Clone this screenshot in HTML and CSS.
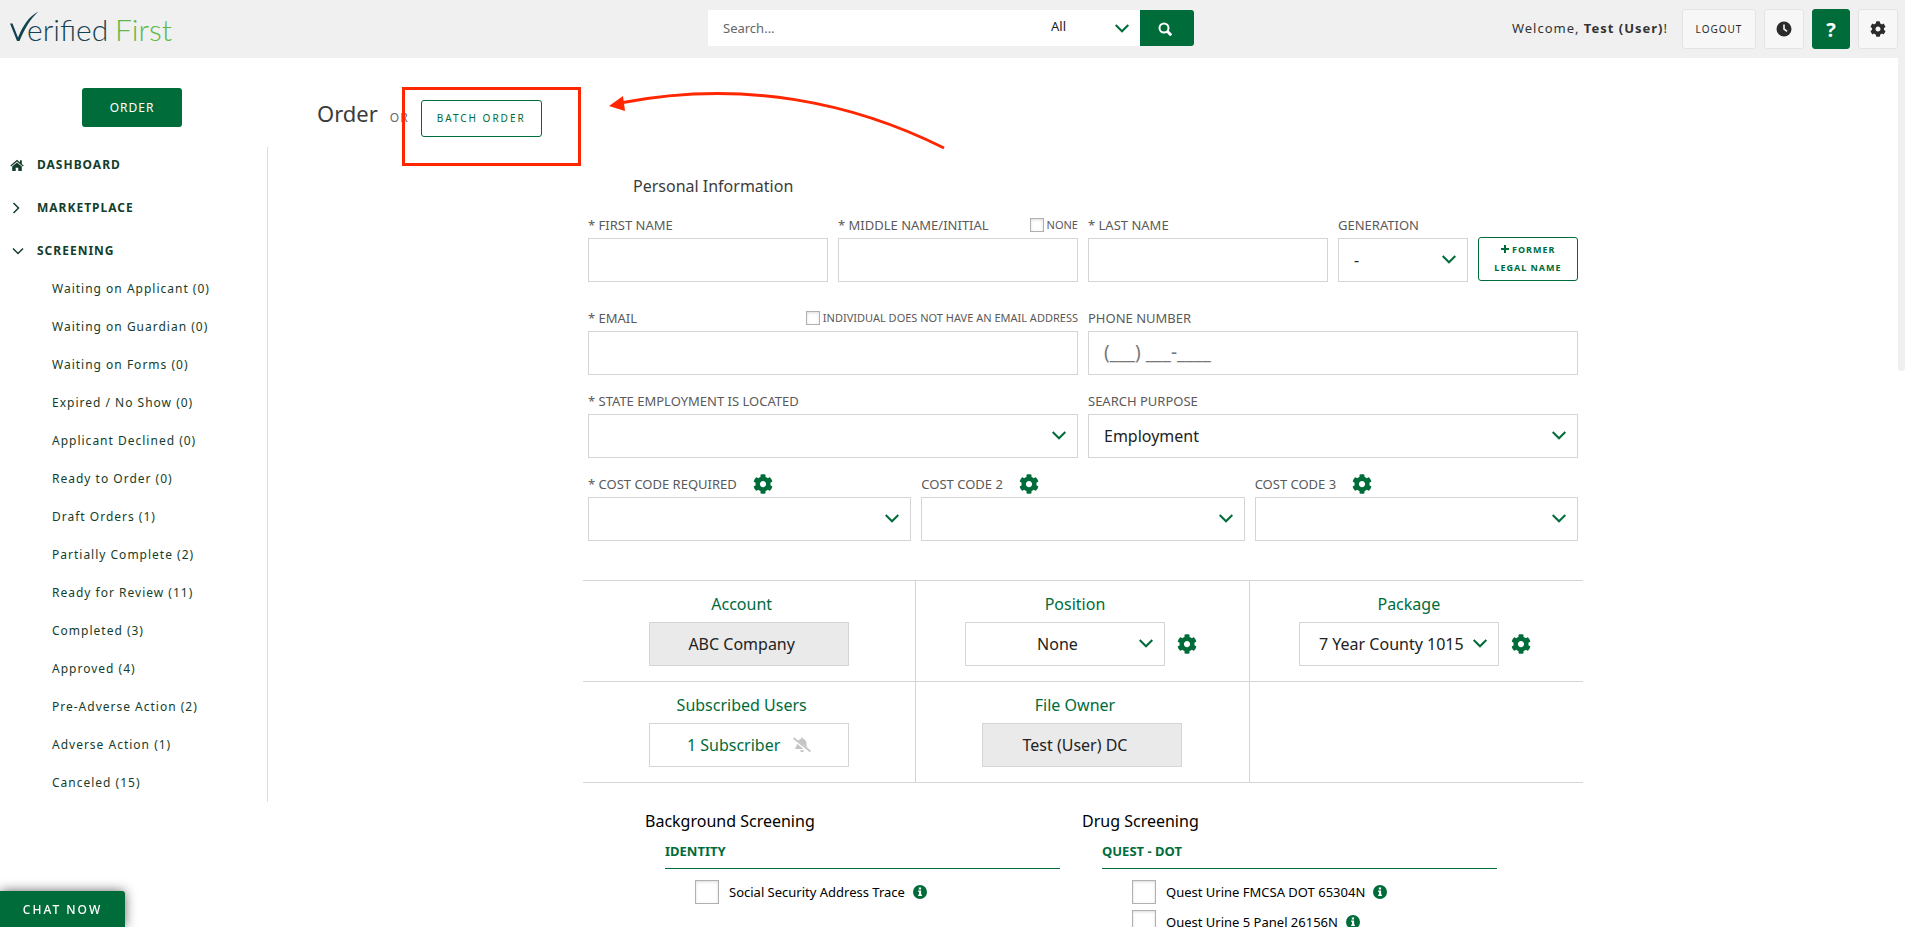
FILE: index.html
```html
<!DOCTYPE html>
<html lang="en">

<head>
    <meta charset="UTF-8">
    <title>Verified First - Order</title>
    <link rel="stylesheet" href="styles.css">
</head>

<body>

    <!-- shared icons -->
    <svg class="icon-defs" aria-hidden="true">
        <symbol id="cog" viewBox="0 0 512 512">
            <path d="M487.4 315.7l-42.6-24.6c4.3-23.2 4.3-47 0-70.2l42.6-24.6c4.9-2.8 7.1-8.6 5.5-14-11.1-35.6-30-67.8-54.7-94.6-3.8-4.1-10-5.1-14.8-2.3L380.8 110c-17.9-15.4-38.5-27.3-60.8-35.1V25.8c0-5.6-3.9-10.5-9.4-11.7-36.7-8.2-74.3-7.8-109.2 0-5.5 1.2-9.4 6.1-9.4 11.7V75c-22.2 7.9-42.8 19.8-60.8 35.1L88.7 85.5c-4.9-2.8-11-1.9-14.8 2.3-24.7 26.7-43.6 58.9-54.7 94.6-1.7 5.4.6 11.2 5.5 14L67.3 221c-4.3 23.2-4.3 47 0 70.2l-42.6 24.6c-4.9 2.8-7.1 8.6-5.5 14 11.1 35.6 30 67.8 54.7 94.6 3.8 4.1 10 5.1 14.8 2.3l42.6-24.6c17.9 15.4 38.5 27.3 60.8 35.1v49.2c0 5.6 3.9 10.5 9.4 11.7 36.7 8.2 74.3 7.8 109.2 0 5.5-1.2 9.4-6.1 9.4-11.7v-49.2c22.2-7.9 42.8-19.8 60.8-35.1l42.6 24.6c4.9 2.8 11 1.9 14.8-2.3 24.7-26.7 43.6-58.9 54.7-94.6 1.5-5.5-.7-11.3-5.6-14.1zM256 336c-44.1 0-80-35.9-80-80s35.9-80 80-80 80 35.9 80 80-35.9 80-80 80z"/>
        </symbol>
        <symbol id="info" viewBox="0 0 14 14">
            <circle cx="7" cy="7" r="7"/>
            <path fill="#fff" d="M5.8 2.6h2.3v2H5.8zM5.2 5.6h2.9v4h.8v1.5H5.2V9.6H6V7.1h-.8z"/>
        </symbol>
    </svg>

    <header class="topbar">
        <a class="logo" href="#" aria-label="Verified First">
            <svg width="170" height="42" viewBox="0 0 170 42">
                <path fill="#14424f" d="M0 19.500h2.500l5.500 14C13 22 18 13 28.500 7.500C20 15 15 24 9.500 37H7z"/>
                <text class="logo-dark" x="17" y="37">erified</text>
                <text class="logo-green" x="105" y="37">First</text>
            </svg>
        </a>

        <form class="search">
            <input type="text" class="search-text" placeholder="Search..." aria-label="Search">
            <select class="search-type" aria-label="Search type">
                <option>All</option>
            </select>
            <button type="button" class="search-btn" aria-label="Search">
                <svg width="14" height="14" viewBox="0 0 14 14" fill="none" stroke="#fff" stroke-width="2">
                    <circle cx="6" cy="6" r="4.500"/>
                    <path stroke-width="3" d="M9.300 9.300l4 4"/>
                </svg>
            </button>
        </form>

        <div class="user">
            <span class="welcome">Welcome, <b>Test (User)</b>!</span>
            <button type="button" class="top-btn logout">LOGOUT</button>
            <button type="button" class="top-btn" aria-label="History">
                <svg width="16" height="16" viewBox="0 0 16 16">
                    <circle cx="8" cy="8" r="7.500" fill="#2b2b2b"/>
                    <path d="M8 3.500V8l3 2.300" fill="none" stroke="#f7f7f7" stroke-width="1.600"/>
                </svg>
            </button>
            <button type="button" class="top-btn help" aria-label="Help">?</button>
            <button type="button" class="top-btn settings" aria-label="Settings">
                <svg width="16" height="16"><use href="#cog"/></svg>
            </button>
        </div>
    </header>

    <div class="page">

        <aside class="sidebar">
            <button type="button" class="order-btn">ORDER</button>

            <nav>
                <ul class="menu">
                    <li>
                        <a href="#">
                            <svg width="14" height="12" viewBox="0 0 14 12" fill="#143d2b">
                                <path d="M7 .8L.3 6.500l.8.900L7 2.500l5.900 4.900.8-.9-1.900-1.600V1.300H10v2z"/>
                                <path d="M7 3.500L2.200 7.500V12h3.500V8.700h2.600V12h3.500V7.500z"/>
                            </svg>
                            DASHBOARD
                        </a>
                    </li>
                    <li>
                        <a href="#">
                            <svg width="14" height="12" viewBox="0 0 14 12" fill="none" stroke="#143d2b" stroke-width="1.500"><path d="M3.500 1l5 5-5 5"/></svg>
                            MARKETPLACE
                        </a>
                    </li>
                    <li>
                        <a href="#">
                            <svg width="14" height="12" viewBox="0 0 14 12" fill="none" stroke="#143d2b" stroke-width="1.500"><path d="M3 3.500l5 5 5-5"/></svg>
                            SCREENING
                        </a>
                    </li>
                </ul>
                <ul class="submenu">
                    <li><a href="#">Waiting on Applicant (0)</a></li>
                    <li><a href="#">Waiting on Guardian (0)</a></li>
                    <li><a href="#">Waiting on Forms (0)</a></li>
                    <li><a href="#">Expired / No Show (0)</a></li>
                    <li><a href="#">Applicant Declined (0)</a></li>
                    <li><a href="#">Ready to Order (0)</a></li>
                    <li><a href="#">Draft Orders (1)</a></li>
                    <li><a href="#">Partially Complete (2)</a></li>
                    <li><a href="#">Ready for Review (11)</a></li>
                    <li><a href="#">Completed (3)</a></li>
                    <li><a href="#">Approved (4)</a></li>
                    <li><a href="#">Pre-Adverse Action (2)</a></li>
                    <li><a href="#">Adverse Action (1)</a></li>
                    <li><a href="#">Canceled (15)</a></li>
                </ul>
            </nav>
        </aside>

        <main class="content">

            <div class="heading">
                <h1>Order</h1>
                <span class="or">OR</span>
                <button type="button" class="batch-btn">BATCH ORDER</button>
                <div class="callout"></div>
                <svg class="callout-arrow" width="344" height="66" viewBox="0 0 344 66">
                    <path d="M340 59C250 14 140-10 16 14" fill="none" stroke="#ff2600" stroke-width="3"/>
                    <path d="M5 17l14-10 2 15z" fill="#ff2600"/>
                </svg>
            </div>

            <form class="order-form">

                <h2 class="info-title">Personal Information</h2>

                <div class="row names">
                    <div class="field">
                        <div class="label-row"><label for="first">* FIRST NAME</label></div>
                        <input type="text" id="first">
                    </div>
                    <div class="field">
                        <div class="label-row">
                            <label for="middle">* MIDDLE NAME/INITIAL</label>
                            <label class="small-check"><input type="checkbox">NONE</label>
                        </div>
                        <input type="text" id="middle">
                    </div>
                    <div class="field">
                        <div class="label-row"><label for="last">* LAST NAME</label></div>
                        <input type="text" id="last">
                    </div>
                    <div class="field">
                        <div class="label-row"><label for="generation">GENERATION</label></div>
                        <select id="generation">
                            <option>-</option>
                        </select>
                    </div>
                    <button type="button" class="former-btn">
                        <svg width="8" height="8" viewBox="0 0 8 8" stroke="#006c3a" stroke-width="2"><path d="M4 0v8M0 4h8"/></svg>
                        FORMER<br>LEGAL NAME
                    </button>
                </div>

                <div class="row half">
                    <div class="field">
                        <div class="label-row">
                            <label for="email">* EMAIL</label>
                            <label class="small-check"><input type="checkbox">INDIVIDUAL DOES NOT HAVE AN EMAIL ADDRESS</label>
                        </div>
                        <input type="text" id="email">
                    </div>
                    <div class="field">
                        <div class="label-row"><label for="phone">PHONE NUMBER</label></div>
                        <input type="text" id="phone" placeholder="(___) ___-____">
                    </div>
                </div>

                <div class="row half">
                    <div class="field">
                        <div class="label-row"><label for="state">* STATE EMPLOYMENT IS LOCATED</label></div>
                        <select id="state">
                            <option></option>
                        </select>
                    </div>
                    <div class="field">
                        <div class="label-row"><label for="purpose">SEARCH PURPOSE</label></div>
                        <select id="purpose">
                            <option>Employment</option>
                        </select>
                    </div>
                </div>

                <div class="row thirds">
                    <div class="field">
                        <div class="label-row codes">
                            <label for="code1">* COST CODE REQUIRED</label>
                            <button type="button" class="cog-btn" aria-label="Edit cost code 1"><svg width="20" height="20"><use href="#cog"/></svg></button>
                        </div>
                        <select id="code1">
                            <option></option>
                        </select>
                    </div>
                    <div class="field">
                        <div class="label-row codes">
                            <label for="code2">COST CODE 2</label>
                            <button type="button" class="cog-btn" aria-label="Edit cost code 2"><svg width="20" height="20"><use href="#cog"/></svg></button>
                        </div>
                        <select id="code2">
                            <option></option>
                        </select>
                    </div>
                    <div class="field">
                        <div class="label-row codes">
                            <label for="code3">COST CODE 3</label>
                            <button type="button" class="cog-btn" aria-label="Edit cost code 3"><svg width="20" height="20"><use href="#cog"/></svg></button>
                        </div>
                        <select id="code3">
                            <option></option>
                        </select>
                    </div>
                </div>

                <div class="details">
                    <div class="cell">
                        <label for="account">Account</label>
                        <div class="cell-box">
                            <input type="text" id="account" value="ABC Company" readonly>
                        </div>
                    </div>
                    <div class="cell">
                        <label for="position">Position</label>
                        <div class="cell-box">
                            <select id="position">
                                <option>None</option>
                            </select>
                            <button type="button" class="cog-btn" aria-label="Edit positions"><svg width="20" height="20"><use href="#cog"/></svg></button>
                        </div>
                    </div>
                    <div class="cell">
                        <label for="package">Package</label>
                        <div class="cell-box">
                            <select id="package">
                                <option>7 Year County 1015</option>
                            </select>
                            <button type="button" class="cog-btn" aria-label="Edit packages"><svg width="20" height="20"><use href="#cog"/></svg></button>
                        </div>
                    </div>
                    <div class="cell">
                        <label for="subscribers">Subscribed Users</label>
                        <div class="cell-box">
                            <button type="button" id="subscribers" class="subscriber-btn">
                                1 Subscriber
                                <svg width="18" height="16" viewBox="0 0 18 16" fill="#c4c4c4">
                                    <path d="M5 4C6 2.700 7.200 2 8.300 1.700V.5h1.500v1.200C12.200 2.200 13.500 4 13.500 6.300c0 2 .3 3 1.200 4.200zM3.900 6.800L10.500 12H3c-.8 0-1-.9-.5-1.400.9-1 1.300-2 1.400-3.800zM7.200 13.300h3.700c0 2.600-3.700 2.600-3.700 0z"/>
                                    <path d="M.5 1l17 13.500" stroke="#c4c4c4" stroke-width="1.800"/>
                                </svg>
                            </button>
                        </div>
                    </div>
                    <div class="cell">
                        <label for="owner">File Owner</label>
                        <div class="cell-box">
                            <input type="text" id="owner" value="Test (User) DC" readonly>
                        </div>
                    </div>
                    <div class="cell"></div>
                </div>

                <div class="screenings">
                    <section>
                        <h2>Background Screening</h2>
                        <h3>IDENTITY</h3>
                        <div class="check">
                            <input type="checkbox" id="ssat">
                            <label for="ssat">Social Security Address Trace</label>
                            <svg width="14" height="14"><use href="#info"/></svg>
                        </div>
                    </section>
                    <section>
                        <h2>Drug Screening</h2>
                        <h3>QUEST - DOT</h3>
                        <div class="check">
                            <input type="checkbox" id="fmcsa">
                            <label for="fmcsa">Quest Urine FMCSA DOT 65304N</label>
                            <svg width="14" height="14"><use href="#info"/></svg>
                        </div>
                        <div class="check">
                            <input type="checkbox" id="panel5">
                            <label for="panel5">Quest Urine 5 Panel 26156N</label>
                            <svg width="14" height="14"><use href="#info"/></svg>
                        </div>
                    </section>
                </div>

            </form>
        </main>

        <div class="scroll-track"><div class="scroll-thumb"></div></div>
    </div>

    <button type="button" class="chat-btn">CHAT NOW</button>

</body>

</html>
```

FILE: styles.css
```css
* {
    box-sizing: border-box;
}

body {
    display: flex;
    flex-direction: column;
    height: 100vh;
    margin: 0;
    overflow: hidden;
    background: #fff;
    color: #333;
    font-family: "Noto Sans", "Open Sans", sans-serif;
    font-size: 16px;
}

h1, h2, h3, ul {
    margin: 0;
    padding: 0;
    font-weight: normal;
}

ul {
    list-style: none;
}

a {
    color: inherit;
    text-decoration: none;
}

button, input, select {
    margin: 0;
    font-family: inherit;
    border-radius: 0;
}

button {
    padding: 0;
    cursor: pointer;
}

.icon-defs {
    position: absolute;
    width: 0;
    height: 0;
}

/* top bar */

.topbar {
    display: grid;
    grid-template-columns: 1fr 486px 1fr;
    flex: none;
    height: 58px;
    padding: 0 7px 0 4px;
    background: #f0f0f0;
}

.logo {
    padding: 4px 0 0 6px;
}

.logo text {
    font-family: Lato, sans-serif;
    font-weight: 300;
    font-size: 30px;
}

.logo-dark {
    fill: #14424f;
}

.logo-green {
    fill: #5cb947;
}

.search {
    display: flex;
    height: 36px;
    margin-top: 10px;
}

.search-text {
    flex: 1;
    min-width: 0;
    padding: 0 15px;
    border: 0;
    font-size: 13px;
}

.search-text::placeholder {
    color: #666;
}

select {
    appearance: none;
    background: #fff url("data:image/svg+xml,%3Csvg xmlns='http://www.w3.org/2000/svg' width='14' height='9' viewBox='0 0 14 9'%3E%3Cpath d='M.7 1L7 7.300 13.300 1' fill='none' stroke='%23006c3a' stroke-width='2'/%3E%3C/svg%3E") no-repeat right 11px center;
    color: #222;
}

.search-type {
    width: 101px;
    padding: 0 12px 4px;
    border: 0;
    font-size: 13px;
}

.search-btn {
    width: 54px;
    padding-right: 4px;
    background: #006c3a;
    border: 0;
    border-radius: 0 3px 3px 0;
}

.search-btn svg {
    vertical-align: middle;
}

.user {
    display: flex;
    justify-content: flex-end;
    gap: 8px;
    padding-top: 9px;
}

.welcome {
    margin-right: 6px;
    font-size: 13px;
    line-height: 38px;
    letter-spacing: 1px;
}

.top-btn {
    display: flex;
    align-items: center;
    justify-content: center;
    width: 40px;
    height: 40px;
    background: #f7f7f7;
    border: 1px solid #e4e4e4;
    border-radius: 3px;
    color: #2b2b2b;
    fill: #2b2b2b;
}

.logout {
    width: 74px;
    font-size: 10px;
    letter-spacing: 1px;
}

.help {
    width: 38px;
    background: #006c3a;
    border-color: #006c3a;
    color: #fff;
    font-size: 20px;
    font-weight: bold;
}

/* page */

.page {
    display: flex;
    flex: 1;
    min-height: 0;
}

.sidebar {
    flex: none;
    width: 268px;
    padding-top: 30px;
}

.order-btn {
    display: block;
    width: 100px;
    height: 39px;
    margin: 0 auto 20px 82px;
    background: #006c3a;
    border: 0;
    border-radius: 3px;
    color: #fff;
    font-size: 12px;
    letter-spacing: 1px;
}

nav {
    border-right: 1px solid #ddd;
    color: #143d2b;
    letter-spacing: 1px;
}

.menu {
    display: flex;
    flex-direction: column;
    gap: 8px;
    padding-bottom: 2px;
}

.menu a {
    display: flex;
    align-items: center;
    gap: 13px;
    height: 35px;
    padding-left: 10px;
    font-size: 12px;
    font-weight: bold;
}

.submenu a {
    display: block;
    padding-left: 52px;
    font-size: 12px;
    line-height: 38px;
}

.content {
    flex: 1;
    min-width: 0;
    overflow: hidden;
}

.heading {
    position: relative;
    display: flex;
    align-items: baseline;
    padding: 39px 0 0 49px;
}

h1 {
    color: #3c3c3c;
    font-size: 22px;
    line-height: 32px;
}

.or {
    margin: 0 12px;
    color: #666;
    font-size: 12px;
    letter-spacing: 1px;
}

.batch-btn {
    width: 121px;
    height: 37px;
    background: #fff;
    border: 1px solid #006c3a;
    border-radius: 3px;
    color: #006c3a;
    font-size: 10px;
    letter-spacing: 2px;
}

.callout {
    position: absolute;
    top: 29px;
    left: 134px;
    width: 179px;
    height: 79px;
    border: 3px solid #ff2600;
}

.callout-arrow {
    position: absolute;
    top: 31px;
    left: 336px;
}

.order-form {
    max-width: 1000px;
    margin: 37px auto 0;
}

.info-title {
    margin-bottom: 17px;
    padding-left: 50px;
    color: #3c3c3c;
    font-size: 16px;
    line-height: 24px;
}

.row {
    display: grid;
    gap: 10px;
    margin-bottom: 16px;
    padding: 0 5px;
}

.names {
    grid-template-columns: 24fr 24fr 24fr 13fr 10fr;
    margin-bottom: 26px;
}

.half {
    grid-template-columns: 1fr 1fr;
}

.thirds {
    grid-template-columns: 1fr 1fr 1fr;
    margin-bottom: 39px;
}

.field {
    min-width: 0;
}

.label-row {
    display: flex;
    align-items: center;
    justify-content: space-between;
    height: 20px;
    margin-bottom: 3px;
    color: #5a5a5a;
    font-size: 13px;
    white-space: nowrap;
}

.codes {
    justify-content: flex-start;
    gap: 16px;
}

.small-check {
    display: flex;
    align-items: center;
    gap: 3px;
    font-size: 11px;
}

input[type=checkbox] {
    appearance: none;
    width: 14px;
    height: 14px;
    background: #fff;
    border: 1px solid #b0b0b0;
    box-shadow: inset 0 1px 3px #ddd;
}

.field > input,
.field > select {
    display: block;
    width: 100%;
    height: 44px;
    padding: 0 15px;
    border: 1px solid #d5d5d5;
    font-size: 16px;
}

.field > input::placeholder {
    color: #777;
    font-size: 19px;
}

.former-btn {
    align-self: end;
    height: 44px;
    margin-bottom: 1px;
    background: #fff;
    border: 1px solid #006c3a;
    border-radius: 3px;
    color: #006c3a;
    font-size: 9px;
    font-weight: bold;
    line-height: 18px;
    letter-spacing: 1px;
}

.cog-btn {
    display: flex;
    background: none;
    border: 0;
    fill: #006c3a;
}

/* account details */

.details {
    display: grid;
    grid-template-columns: 1fr 1fr 1fr;
    border-top: 1px solid #d5d5d5;
}

.cell {
    height: 101px;
    padding-top: 11px;
    border-right: 1px solid #d5d5d5;
    border-bottom: 1px solid #d5d5d5;
    text-align: center;
}

.cell:nth-child(3n) {
    border-right: 0;
}

.cell label {
    display: block;
    margin-bottom: 6px;
    padding-right: 15px;
    color: #006c3a;
    font-size: 16px;
    line-height: 24px;
}

.cell-box {
    display: flex;
    align-items: center;
    justify-content: center;
    gap: 12px;
}

.cell-box .cog-btn {
    margin-right: 3px;
}

.cell-box input,
.cell-box select,
.subscriber-btn {
    width: 200px;
    height: 44px;
    padding: 0 30px 0 15px;
    background-color: #fff;
    border: 1px solid #d5d5d5;
    color: #222;
    font-size: 16px;
    text-align: center;
}

.cell-box input {
    background-color: #eaeaea;
}

.subscriber-btn {
    display: flex;
    align-items: center;
    justify-content: center;
    gap: 13px;
    padding: 0;
    color: #006c3a;
}

/* screenings */

.screenings {
    display: grid;
    grid-template-columns: 1fr 1fr;
    gap: 22px;
    padding: 26px 86px 0 62px;
    color: #000;
}

.screenings h2 {
    font-size: 16px;
    line-height: 24px;
}

.screenings h3 {
    margin: 8px 0 11px 20px;
    padding-bottom: 7px;
    border-bottom: 1px solid #006c3a;
    color: #006c3a;
    font-size: 13px;
    font-weight: bold;
    line-height: 20px;
}

.check {
    display: flex;
    align-items: center;
    gap: 8px;
    margin-bottom: 6px;
    padding-left: 50px;
    font-size: 13px;
    fill: #006c3a;
}

.check input[type=checkbox] {
    width: 24px;
    height: 24px;
    margin-right: 2px;
}

.scroll-track {
    flex: none;
    width: 7px;
}

.scroll-thumb {
    height: 36%;
    background: #f0f0f0;
    border-radius: 0 0 4px 4px;
}

.chat-btn {
    position: fixed;
    bottom: 0;
    left: 0;
    width: 125px;
    height: 36px;
    background: #006c3a;
    border: 0;
    border-radius: 0 3px 0 0;
    box-shadow: 0 0 12px rgba(0, 0, 0, .6);
    color: #fff;
    font-size: 12px;
    font-weight: 500;
    letter-spacing: 2px;
}
```
